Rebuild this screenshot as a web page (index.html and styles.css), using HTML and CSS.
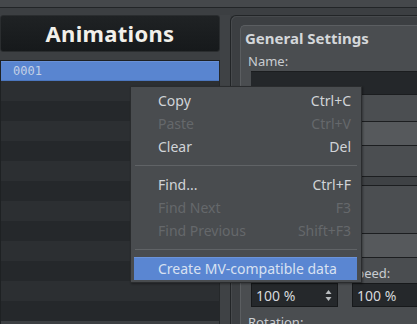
FILE: index.html
```html
<!DOCTYPE html>
<html lang="en">
<head>
    <meta charset="UTF-8">
    <meta name="viewport" content="width=device-width, initial-scale=1.0">
    <title>Animations</title>
    <link rel="stylesheet" href="styles.css">
</head>
<body>
    <div class="topbar"></div>

    <div class="main">
        <div class="left">
            <div class="header">Animations</div>
            <div class="list">
                <div class="row selected">0001</div>
                <div class="row"></div>
                <div class="row"></div>
                <div class="row"></div>
                <div class="row"></div>
                <div class="row"></div>
                <div class="row"></div>
                <div class="row"></div>
                <div class="row"></div>
                <div class="row"></div>
                <div class="row"></div>
                <div class="row"></div>
                <div class="row"></div>
            </div>
        </div>

        <div class="splitter"></div>

        <div class="frame">
            <div class="group">
                <div class="group-title">General Settings</div>
                <div class="fields">
                    <div class="label">Name:</div>
                    <div class="name-input"></div>
                    <div class="block"></div>
                    <div class="block light"></div>
                    <div class="block tall"></div>
                    <div class="block band"></div>
                    <div class="block big"></div>
                    <div class="block light"></div>

                    <div class="spin-row">
                        <div class="spin-col">
                            <div class="label-space"></div>
                            <div class="spin">
                                <span>100 %</span>
                                <span class="arrows">
                                    <svg width="7" height="13" viewBox="0 0 7 13">
                                        <path d="M3.5 1 L6.5 5 L0.5 5 Z" fill="#b9bcbf"/>
                                        <path d="M3.5 12 L6.5 8 L0.5 8 Z" fill="#b9bcbf"/>
                                    </svg>
                                </span>
                            </div>
                        </div>
                        <div class="spin-col wide">
                            <div class="label">Speed:</div>
                            <div class="spin">
                                <span>100 %</span>
                            </div>
                        </div>
                    </div>
                    <div class="label rotation">Rotation:</div>
                </div>
            </div>
        </div>
    </div>

    <!-- context menu over the list -->
    <div class="menu">
        <div class="item"><span>Copy</span><span>Ctrl+C</span></div>
        <div class="item disabled"><span>Paste</span><span>Ctrl+V</span></div>
        <div class="item"><span>Clear</span><span>Del</span></div>
        <div class="sep"></div>
        <div class="item"><span>Find...</span><span>Ctrl+F</span></div>
        <div class="item disabled"><span>Find Next</span><span>F3</span></div>
        <div class="item disabled"><span>Find Previous</span><span>Shift+F3</span></div>
        <div class="sep"></div>
        <div class="item active"><span>Create MV-compatible data</span><span></span></div>
    </div>
</body>
</html>
```

FILE: styles.css
```css
body {
    margin: 0;
    width: 417px;
    height: 324px;
    overflow: hidden;
    background-color: #3c3f42;
    font-family: "Noto Sans", sans-serif;
    color: #cacdd1;
    position: relative;
}
.topbar {
    height: 7px;
    background-color: #45484b;
    border-bottom: 1px solid #222527;
}
.main {
    display: flex;
    padding-top: 7px;
    height: 309px;
}
.left {
    width: 220px;
    display: flex;
    flex-direction: column;
    flex-shrink: 0;
}
.header {
    height: 35px;
    line-height: 35px;
    border: 1px solid #2a2d2f;
    border-radius: 3px;
    background: linear-gradient(#1f2224, #16191b);
    color: #f2f0ea;
    font-weight: bold;
    font-size: 22px;
    text-align: center;
    letter-spacing: 0.3px;
}
.list {
    margin-top: 8px;
    flex: 1;
    border-top: 1px solid #1e2123;
    border-left: 1px solid #1e2123;
    border-right: 1px solid #25282a;
    overflow: hidden;
}
.row {
    height: 20px;
    background-color: #25282b;
}
.row:nth-child(even) {
    background-color: #2c2f32;
}
.row.selected {
    background-color: #5985d0;
    box-shadow: inset 0 1px 0 #6991d8, inset 0 -1px 0 #4c77bf;
    color: #c3d0e6;
    font-family: "DejaVu Sans Mono", monospace;
    font-size: 12px;
    line-height: 20px;
    padding-left: 12px;
}
.splitter {
    width: 10px;
    flex-shrink: 0;
    background-color: #3f4245;
}
.frame {
    flex: 1;
    border: 1px solid #222527;
    border-right: none;
    border-bottom: none;
    border-radius: 6px 0 0 0;
    background-color: #3c3f42;
    box-shadow: inset 1px 1px 0 #474a4d;
    padding: 9px 0 0 9px;
}
.group {
    height: 100%;
    border: 1px solid #5b5e61;
    border-right: none;
    border-bottom: none;
    border-radius: 5px 0 0 0;
    background-color: #4a4d50;
    padding-left: 4px;
}
.group-title {
    font-weight: bold;
    font-size: 15px;
    line-height: 20px;
    margin-top: 2px;
    color: #d4d7da;
}
.fields {
    padding-left: 3px;
}
.label {
    font-size: 13px;
    line-height: 18px;
    color: #c9ccd0;
}
.label-space {
    height: 18px;
}
.fields > .label:first-child {
    margin-top: 4px;
}
.name-input {
    height: 22px;
    margin-left: 3px;
    margin-top: 1px;
    background-color: #24272a;
    border-top: 1px solid #1b1d1f;
    border-bottom: 1px solid #1b1d1f;
}
.block {
    margin-left: 3px;
    height: 26px;
    background-color: #4b4e51;
    border-bottom: 1px solid #1c1e20;
}
.block.light {
    height: 23px;
    background-color: #56595c;
}
.block.tall {
    height: 30px;
}
.block.band {
    height: 8px;
    background-color: #3f4245;
}
.block.big {
    height: 47px;
}
.spin-row {
    display: flex;
    gap: 14px;
    margin-top: 6px;
    margin-left: 3px;
}
.spin-col {
    width: 87px;
    flex-shrink: 0;
}
.spin-col.wide {
    width: 120px;
}
.spin-col .label {
    margin-left: -3px;
}
.spin {
    height: 22px;
    margin-top: 1px;
    border: 1px solid #17191b;
    background-color: #25282b;
    display: flex;
    align-items: center;
    justify-content: space-between;
    padding: 0 5px 0 4px;
    font-size: 14px;
    color: #d6d9dc;
}
.arrows {
    display: flex;
    align-items: center;
}
.label.rotation {
    margin-top: 6px;
}

/* context menu */
.menu {
    position: absolute;
    left: 130px;
    top: 86px;
    width: 230px;
    padding: 2px 0;
    background-color: #494c4f;
    border: 1px solid #2a2c2e;
    box-shadow: 1px 1px 2px rgba(0, 0, 0, 0.35);
}
.item {
    display: flex;
    justify-content: space-between;
    height: 23px;
    line-height: 23px;
    margin: 0 4px 0 3px;
    padding: 0 6px 0 24px;
    font-size: 14px;
    color: #d1d4d8;
}
.item.disabled {
    color: #65686b;
}
.item.active {
    background-color: #5a86d2;
    box-shadow: inset 0 1px 0 #6b93da;
    color: #d8e1f1;
}
.sep {
    height: 1px;
    margin: 7px 4px 7px 4px;
    background-color: #606366;
}
```
